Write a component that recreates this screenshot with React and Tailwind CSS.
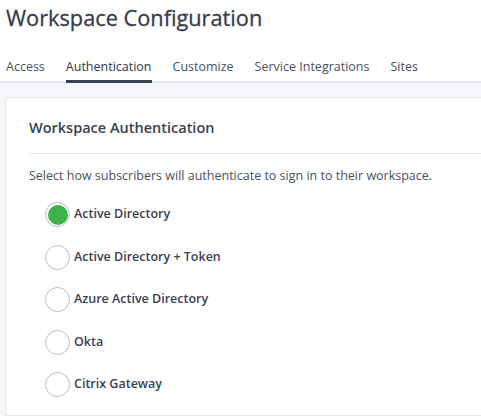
import React from "react";

const tabs = ["Access", "Authentication", "Customize", "Service Integrations", "Sites"];
const options = [
  "Active Directory",
  "Active Directory + Token",
  "Azure Active Directory",
  "Okta",
  "Citrix Gateway",
];

export default function App() {
  return (
    <div
      className="w-[481px] h-[416px] overflow-hidden bg-white flex flex-col"
      style={{ fontFamily: '"Open Sans", "Noto Sans", sans-serif' }}
    >
      <h1 className="pl-[6px] pt-[2px] text-[21.75px] leading-[32px] font-normal text-[#353c4b] [-webkit-text-stroke:0.3px_#353c4b]">
        Workspace Configuration
      </h1>
      <div className="mt-[24px] flex gap-[21px] pl-[6px] border-b-2 border-[#e4e7eb] h-[25px]">
        {tabs.map((t, i) => (
          <div
            key={t}
            className={
              "text-[12.5px] leading-[18px] " +
              (i === 1
                ? "text-[#2f3645] border-b-[3px] border-[#3b4254] -mb-[2px]"
                : "text-[#4a5161]")
            }
          >
            {t}
          </div>
        ))}
      </div>
      <div className="flex-1 bg-[#f5f7fa] pl-[5px] pt-[14px]">
        <div className="h-full bg-white border border-r-0 border-[#e3e6ea] rounded-tl-[3px] pl-[23px] pt-[20px]">
          <h2 className="text-[14.5px] leading-[20px] font-semibold text-[#3a4150]">
            Workspace Authentication
          </h2>
          <div className="mt-[15px] border-t border-[#e4e7eb]" />
          <p className="mt-[13px] text-[12.5px] leading-[18px] text-[#4a5161]">
            Select how subscribers will authenticate to sign in to their workspace.
          </p>
          <div className="mt-[17px] pl-[16px] flex flex-col gap-[17.5px]">
            {options.map((o, i) => (
              <label key={o} className="flex items-center gap-[4px]">
                <span className="w-[25px] h-[25px] rounded-full border border-[#b9bdc4] bg-white flex items-center justify-center">
                  {i === 0 && <span className="w-[20px] h-[20px] rounded-full bg-[#3cb44a]" />}
                </span>
                <span className="text-[12.5px] font-semibold text-[#3a4150]">{o}</span>
              </label>
            ))}
          </div>
        </div>
      </div>
    </div>
  );
}
